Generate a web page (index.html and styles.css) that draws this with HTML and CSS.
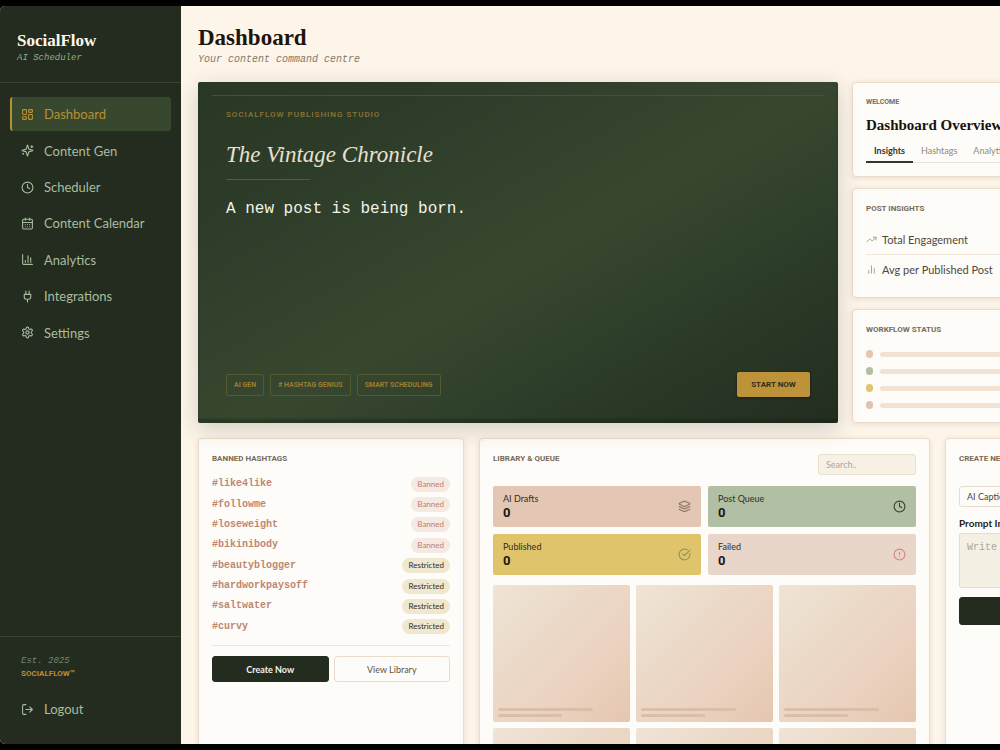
FILE: index.html
```html
<!DOCTYPE html>
<html lang="en">
<head>
  <meta charset="UTF-8" />
  <meta name="viewport" content="width=device-width, initial-scale=1.0"/>
  <title>SocialFlow | Dashboard</title>
  <link rel="stylesheet" href="styles.css">
</head>
<body>

<div class="app">

  <!-- Sidebar -->
  <aside class="sidebar">
    <div class="brand">
      <div class="brand-name">SocialFlow</div>
      <div class="brand-sub">AI Scheduler</div>
    </div>
    <nav class="nav">
      <a class="nav-link active" href="#">
        <svg class="icon" viewBox="0 0 24 24"><rect x="3" y="3" width="7" height="9" rx="1"/><rect x="14" y="3" width="7" height="5" rx="1"/><rect x="14" y="12" width="7" height="9" rx="1"/><rect x="3" y="16" width="7" height="5" rx="1"/></svg>
        Dashboard
      </a>
      <a class="nav-link" href="#">
        <svg class="icon" viewBox="0 0 24 24"><path d="M9.94 15.5A2 2 0 0 0 8.5 14.06l-6.14-1.58a.5.5 0 0 1 0-.96L8.5 9.94A2 2 0 0 0 9.94 8.5l1.58-6.14a.5.5 0 0 1 .96 0L14.06 8.5A2 2 0 0 0 15.5 9.94l6.14 1.58a.5.5 0 0 1 0 .96L15.5 14.06a2 2 0 0 0-1.44 1.44l-1.58 6.14a.5.5 0 0 1-.96 0z"/><path d="M20 3v4M22 5h-4M4 17v2M5 18H3"/></svg>
        Content Gen
      </a>
      <a class="nav-link" href="#">
        <svg class="icon" viewBox="0 0 24 24"><circle cx="12" cy="12" r="10"/><path d="M12 6v6l4 2"/></svg>
        Scheduler
      </a>
      <a class="nav-link" href="#">
        <svg class="icon" viewBox="0 0 24 24"><rect x="3" y="4" width="18" height="18" rx="2"/><path d="M8 2v4M16 2v4M3 10h18M8 14h.01M12 14h.01M16 14h.01M8 18h.01M12 18h.01M16 18h.01"/></svg>
        Content Calendar
      </a>
      <a class="nav-link" href="#">
        <svg class="icon" viewBox="0 0 24 24"><path d="M3 3v16a2 2 0 0 0 2 2h16M18 17V9M13 17V5M8 17v-3"/></svg>
        Analytics
      </a>
      <a class="nav-link" href="#">
        <svg class="icon" viewBox="0 0 24 24"><path d="M12 22v-5M9 8V2M15 8V2M18 8v5a4 4 0 0 1-4 4h-4a4 4 0 0 1-4-4V8z"/></svg>
        Integrations
      </a>
      <a class="nav-link" href="#">
        <svg class="icon" viewBox="0 0 24 24"><path d="M12.22 2h-.44a2 2 0 0 0-2 2v.18a2 2 0 0 1-1 1.73l-.43.25a2 2 0 0 1-2 0l-.15-.08a2 2 0 0 0-2.73.73l-.22.38a2 2 0 0 0 .73 2.73l.15.1a2 2 0 0 1 1 1.72v.51a2 2 0 0 1-1 1.74l-.15.09a2 2 0 0 0-.73 2.73l.22.38a2 2 0 0 0 2.73.73l.15-.08a2 2 0 0 1 2 0l.43.25a2 2 0 0 1 1 1.73V20a2 2 0 0 0 2 2h.44a2 2 0 0 0 2-2v-.18a2 2 0 0 1 1-1.73l.43-.25a2 2 0 0 1 2 0l.15.08a2 2 0 0 0 2.73-.73l.22-.39a2 2 0 0 0-.73-2.73l-.15-.08a2 2 0 0 1-1-1.74v-.5a2 2 0 0 1 1-1.74l.15-.09a2 2 0 0 0 .73-2.73l-.22-.38a2 2 0 0 0-2.73-.73l-.15.08a2 2 0 0 1-2 0l-.43-.25a2 2 0 0 1-1-1.73V4a2 2 0 0 0-2-2z"/><circle cx="12" cy="12" r="3"/></svg>
        Settings
      </a>
    </nav>
    <div class="side-foot">
      <div class="est">Est. 2025</div>
      <div class="mark">SOCIALFLOW™</div>
      <a class="nav-link logout" href="#">
        <svg class="icon" viewBox="0 0 24 24"><path d="M9 21H5a2 2 0 0 1-2-2V5a2 2 0 0 1 2-2h4M16 17l5-5-5-5M21 12H9"/></svg>
        Logout
      </a>
    </div>
  </aside>

  <main class="main">
    <header class="page-head">
      <h1>Dashboard</h1>
      <p>Your content command centre</p>
    </header>

    <!-- Hero + insights -->
    <div class="row-top">
      <section class="hero">
        <div class="hero-label">SOCIALFLOW PUBLISHING STUDIO</div>
        <h2>The Vintage Chronicle</h2>
        <p class="typed">A new post is being born.</p>
        <div class="hero-foot">
          <span class="tag">AI GEN</span>
          <span class="tag"># HASHTAG GENIUS</span>
          <span class="tag">SMART SCHEDULING</span>
          <button class="start" type="button">START NOW</button>
        </div>
      </section>

      <div class="side-cards">
        <section class="card welcome">
          <div class="label small">WELCOME</div>
          <h3>Dashboard Overview</h3>
          <div class="tabs">
            <button class="tab active" type="button">Insights</button>
            <button class="tab" type="button">Hashtags</button>
            <button class="tab" type="button">Analytics</button>
          </div>
        </section>
        <section class="card">
          <div class="label">POST INSIGHTS</div>
          <ul class="insights">
            <li><svg class="icon" viewBox="0 0 24 24"><path d="M22 7l-8.5 8.5-5-5L2 17M16 7h6v6"/></svg>Total Engagement</li>
            <li><svg class="icon" viewBox="0 0 24 24"><path d="M18 20V10M12 20V4M6 20v-6"/></svg>Avg per Published Post</li>
          </ul>
        </section>
        <section class="card">
          <div class="label">WORKFLOW STATUS</div>
          <ul class="workflow">
            <li class="rose"></li>
            <li class="sage"></li>
            <li class="gold"></li>
            <li class="blush"></li>
          </ul>
        </section>
      </div>
    </div>

    <!-- Hashtags, library, create -->
    <div class="row-bottom">
      <section class="card">
        <div class="label">BANNED HASHTAGS</div>
        <ul class="hashtags">
          <li>#like4like <span class="pill">Banned</span></li>
          <li>#followme <span class="pill">Banned</span></li>
          <li>#loseweight <span class="pill">Banned</span></li>
          <li>#bikinibody <span class="pill">Banned</span></li>
          <li>#beautyblogger <span class="pill restricted">Restricted</span></li>
          <li>#hardworkpaysoff <span class="pill restricted">Restricted</span></li>
          <li>#saltwater <span class="pill restricted">Restricted</span></li>
          <li>#curvy <span class="pill restricted">Restricted</span></li>
        </ul>
        <div class="actions">
          <button class="btn dark" type="button">Create Now</button>
          <button class="btn" type="button">View Library</button>
        </div>
      </section>

      <section class="card">
        <div class="library-head">
          <div class="label">LIBRARY &amp; QUEUE</div>
          <input class="search" type="search" placeholder="Search.." aria-label="Search library">
        </div>
        <div class="stats">
          <div class="stat rose">
            <div>AI Drafts<b>0</b></div>
            <svg class="icon" viewBox="0 0 24 24"><path d="M12.83 2.18a2 2 0 0 0-1.66 0L2.6 6.08a1 1 0 0 0 0 1.83l8.58 3.91a2 2 0 0 0 1.66 0l8.58-3.9a1 1 0 0 0 0-1.83z"/><path d="M22 12l-9.17 4.16a2 2 0 0 1-1.66 0L2 12M22 17l-9.17 4.16a2 2 0 0 1-1.66 0L2 17"/></svg>
          </div>
          <div class="stat sage">
            <div>Post Queue<b>0</b></div>
            <svg class="icon" viewBox="0 0 24 24"><circle cx="12" cy="12" r="10"/><path d="M12 6v6l4 2"/></svg>
          </div>
          <div class="stat gold">
            <div>Published<b>0</b></div>
            <svg class="icon" viewBox="0 0 24 24"><path d="M21.8 10A10 10 0 1 1 17 3.34M9 11l3 3L22 4"/></svg>
          </div>
          <div class="stat blush">
            <div>Failed<b>0</b></div>
            <svg class="icon" viewBox="0 0 24 24"><circle cx="12" cy="12" r="10"/><path d="M12 8v4M12 16h.01"/></svg>
          </div>
        </div>
        <div class="tiles">
          <div class="tile"></div>
          <div class="tile"></div>
          <div class="tile"></div>
          <div class="tile"></div>
          <div class="tile"></div>
          <div class="tile"></div>
        </div>
      </section>

      <section class="card create">
        <div class="label">CREATE NEW POST</div>
        <button class="chip" type="button">AI Caption</button>
        <label for="prompt">Prompt Input</label>
        <textarea id="prompt" placeholder="Write a caption"></textarea>
        <button class="btn dark" type="button">Generate</button>
      </section>
    </div>
  </main>

</div>

</body>
</html>
```

FILE: styles.css
```css
* {
  box-sizing: border-box;
}

body {
  margin: 0;
  padding: 6px 0;
  height: 100vh;
  overflow: hidden;
  background: #000;
  font-family: Lato, "Open Sans", sans-serif;
  color: #241f18;
}

h1, h2, h3, p, ul {
  margin: 0;
  padding: 0;
}

ul {
  list-style: none;
}

button, input, textarea {
  font-family: inherit;
  margin: 0;
}

.icon {
  width: 13px;
  height: 13px;
  flex: none;
  fill: none;
  stroke: currentColor;
  stroke-width: 2;
  stroke-linecap: round;
  stroke-linejoin: round;
}

.app {
  display: flex;
  min-width: 1333px;
  height: 100%;
  overflow: hidden;
  border-radius: 5px;
  background: #fdf4ea;
}

/* Sidebar */
.sidebar {
  width: 181px;
  flex: none;
  display: flex;
  flex-direction: column;
  background: #232c1f;
  color: #a9bd9f;
}

.brand {
  height: 77px;
  padding: 24px 17px 0;
  border-bottom: 1px solid #35452f;
}

.brand-name {
  font: bold 17px/22px "Liberation Serif", serif;
  color: #fdf8ee;
}

.brand-sub {
  font: italic 9px/12px "Liberation Mono", monospace;
  color: #8fae8d;
}

.nav {
  display: grid;
  grid-auto-rows: 1fr;
  gap: 2px;
  height: 281px;
  padding: 14px 10px;
}

.nav-link {
  display: flex;
  align-items: center;
  gap: 10px;
  padding-left: 9px;
  border-left: 2px solid transparent;
  border-radius: 3px;
  font-size: 13px;
  color: inherit;
  text-decoration: none;
}

.nav-link.active {
  background: #38482f;
  border-left-color: #b98f35;
  color: #b98f35;
}

.side-foot {
  margin-top: auto;
  padding: 17px 10px 18px;
  border-top: 1px solid #35452f;
}

.est {
  padding-left: 11px;
  font: italic 9px/14px "Liberation Mono", monospace;
  color: #6f8a6c;
}

.mark {
  padding-left: 11px;
  font: bold 8px/12px Roboto, sans-serif;
  color: #b98f35;
}

.logout {
  height: 34px;
  margin-top: 12px;
}

/* Main area */
.main {
  flex: 1;
  padding: 17px;
}

.page-head {
  margin-bottom: 15px;
}

.page-head h1 {
  font: bold 23px/30px "Liberation Serif", serif;
  color: #1d140d;
}

.page-head p {
  font: italic 10px/14px "Liberation Mono", monospace;
  color: #877868;
}

.row-top {
  display: grid;
  grid-template-columns: 640fr 464fr;
  gap: 14px;
}

.hero {
  position: relative;
  display: flex;
  flex-direction: column;
  align-items: flex-start;
  padding: 26px 28px;
  border-radius: 2px;
  background: linear-gradient(150deg, #283824 0%, #2c3c29 20%, #38472f 52%, #2c3d29 72%, #232d1f 100%);
  box-shadow: 0 6px 22px rgba(40, 60, 35, 0.2), inset 0 -4px 2px rgba(20, 32, 20, 0.4);
}

/* thin rule along the top of the hero */
.hero::before {
  content: "";
  position: absolute;
  top: 13px;
  left: 14px;
  right: 14px;
  height: 1px;
  background: #4b512f;
}

.hero-label {
  font: 500 8px/14px Roboto, sans-serif;
  letter-spacing: 1px;
  color: #907534;
}

.hero h2 {
  margin-top: 16px;
  font: italic 23px/34px "Liberation Serif", serif;
  color: #e9e0cf;
}

.hero h2::after {
  content: "";
  display: block;
  width: 84px;
  height: 1px;
  margin-top: 7px;
  background: #5a5a30;
}

.typed {
  margin-top: 18px;
  font: 16px/22px "Liberation Mono", monospace;
  color: #f2f3e6;
}

.hero-foot {
  width: 100%;
  display: flex;
  align-items: center;
  gap: 6px;
  margin-top: auto;
}

.tag {
  padding: 0 7px;
  border: 1px solid #555a2e;
  border-radius: 2px;
  font: bold 7px/20px Roboto, sans-serif;
  color: #9b7e31;
}

.start {
  width: 73px;
  height: 25px;
  margin-left: auto;
  padding: 0;
  border: 0;
  border-radius: 2px;
  background: #be9238;
  box-shadow: 0 1px 3px rgba(0, 0, 0, 0.4);
  font: bold 8px/24px Roboto, sans-serif;
  color: #2d301a;
}

.side-cards {
  display: grid;
  gap: 11px;
}

.card {
  padding: 13px;
  border: 1px solid #eedccb;
  border-radius: 4px;
  background: #fefcf8;
  box-shadow: 0 1px 5px rgba(120, 90, 50, 0.15);
}

.label {
  font: bold 8px/14px Roboto, sans-serif;
  color: #776a5a;
}

.label.small {
  font-size: 7px;
  line-height: 12px;
}

.welcome h3 {
  margin-top: 7px;
  font: bold 15px/20px "Liberation Serif", serif;
  color: #17130e;
  white-space: nowrap;
}

.tabs {
  display: flex;
  margin-top: 5px;
  border-bottom: 1px solid #eae5dc;
}

.tab {
  height: 23px;
  margin-bottom: -1px;
  padding: 0 8px;
  border: 0;
  border-bottom: 2px solid transparent;
  background: none;
  font-size: 9px;
  color: #91897b;
}

.tab.active {
  border-bottom-color: #2e3a27;
  font-weight: bold;
  color: #33372a;
}

.insights {
  margin-top: 8px;
}

.insights li {
  display: flex;
  align-items: center;
  gap: 5px;
  height: 30px;
  font-size: 11px;
  color: #4e473c;
}

.insights li + li {
  border-top: 1px solid #f1e5da;
}

.insights .icon {
  width: 11px;
  height: 11px;
  color: #93a486;
}

.workflow {
  display: grid;
  gap: 9px;
  margin-top: 13px;
}

.workflow li {
  display: flex;
  align-items: center;
  gap: 7px;
}

.workflow li::before {
  content: "";
  width: 7px;
  height: 8px;
  border-radius: 4px;
  background: var(--tone);
}

.workflow li::after {
  content: "";
  flex: 1;
  height: 5px;
  border-radius: 3px;
  background: #f2e2d4;
}

.rose { --tone: #e3c6b3; }
.sage { --tone: #b1c0a4; }
.gold { --tone: #e0c46c; }
.blush { --tone: #e9d6cb; }

.workflow .blush {
  --tone: #dfc2b4;
}

/* Bottom row */
.row-bottom {
  display: grid;
  grid-template-columns: 266fr 451fr 371fr;
  gap: 15px;
  margin-top: 15px;
}

.hashtags {
  display: grid;
  grid-auto-rows: 1fr;
  height: 163px;
  margin-top: 8px;
}

.hashtags li {
  display: flex;
  align-items: center;
  justify-content: space-between;
  font: bold 10px/14px "Liberation Mono", monospace;
  color: #bd8772;
}

.pill {
  padding: 0 6px;
  border-radius: 8px;
  background: #f5e9e2;
  font: 8px/15px Lato, "Open Sans", sans-serif;
  color: #c07f6e;
}

.pill.restricted {
  background: #f0e7cf;
  color: #332e1e;
}

.actions {
  display: grid;
  grid-template-columns: 1fr 1fr;
  gap: 5px;
  margin-top: 8px;
  padding-top: 10px;
  border-top: 1px solid #e9e6dc;
}

.btn {
  height: 26px;
  padding: 0;
  border: 1px solid #eadccb;
  border-radius: 3px;
  background: #fefcf8;
  font-size: 9px;
  color: #5b5349;
}

.btn.dark {
  border-color: #232c1f;
  background: #232c1f;
  font-weight: bold;
  color: #f7f3e8;
}

.library-head {
  display: flex;
  justify-content: space-between;
}

.search {
  width: 98px;
  height: 21px;
  margin-top: 2px;
  padding: 0 7px;
  border: 1px solid #e8dfcc;
  border-radius: 3px;
  background: #f7f0e4;
  font-size: 9px;
}

::placeholder {
  color: #aaa69e;
}

.stats {
  display: grid;
  grid-template-columns: 1fr 1fr;
  gap: 7px;
  margin-top: 11px;
}

.stat {
  display: flex;
  align-items: center;
  justify-content: space-between;
  height: 41px;
  padding: 0 10px;
  border-radius: 2px;
  background: var(--tone);
  font-size: 9px;
  line-height: 12px;
  color: #382a1e;
}

.stat b {
  display: block;
  font: bold 13px/15px Roboto, sans-serif;
  color: #1d1710;
}

.stat .icon {
  color: #433726;
}

.stat.rose .icon {
  color: #8c7560;
}

.stat.gold .icon {
  color: #85935c;
}

.stat.blush .icon {
  color: #d98474;
}

.tiles {
  display: grid;
  grid-template-columns: repeat(3, 1fr);
  gap: 6px;
  margin-top: 10px;
}

.tile {
  display: flex;
  flex-direction: column;
  justify-content: flex-end;
  gap: 3px;
  aspect-ratio: 1;
  padding: 5px;
  border-radius: 2px;
  background: linear-gradient(135deg, #f0e4d6 0%, #ebdac8 35%, #ecd2c0 65%, #e4c7b0 100%);
}

.tile::before,
.tile::after {
  content: "";
  width: 75%;
  height: 3px;
  border-radius: 2px;
  background: #dabeac;
}

.tile::after {
  width: 50%;
}

.create {
  display: flex;
  flex-direction: column;
  align-items: flex-start;
}

.chip {
  height: 21px;
  margin-top: 20px;
  padding: 0 7px;
  border: 1px solid #e9dccd;
  border-radius: 3px;
  background: #fefcf8;
  font-size: 9px;
  color: #4b443b;
}

.create label {
  margin-top: 9px;
  font-size: 10px;
  font-weight: bold;
  line-height: 14px;
}

.create textarea {
  width: 100%;
  height: 55px;
  margin-top: 3px;
  padding: 7px;
  border: 1px solid #e9dccb;
  border-radius: 2px;
  background: #f5f0e4;
  font: 10px/14px "Liberation Mono", monospace;
  resize: none;
}

.create .btn {
  width: 100%;
  height: 28px;
  margin-top: 9px;
}
```
